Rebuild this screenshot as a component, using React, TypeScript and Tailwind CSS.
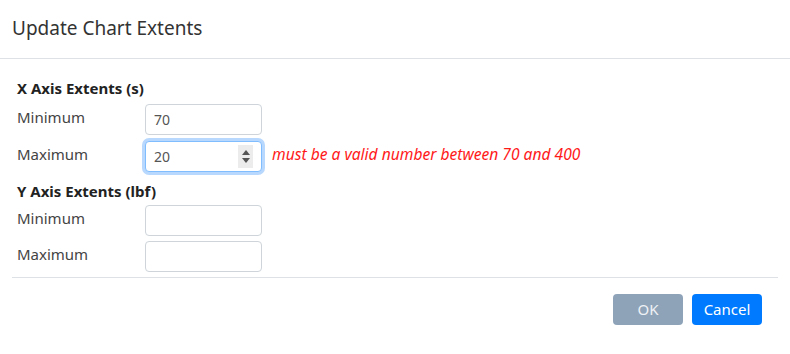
import React from 'react';

const font = { fontFamily: '"Noto Sans", "Open Sans", sans-serif' };

const Field: React.FC<{ label: string; value?: string; focused?: boolean; error?: string }> = ({ label, value = '', focused, error }) => (
  <div className="flex items-center h-[31px]">
    <label className="w-[128px] text-[15px] text-[#444] -mt-[4px]">{label}</label>
    <div className="relative">
      <input
        type="text"
        readOnly
        value={value}
        className={
          focused
            ? 'w-[117px] h-[31px] px-2 text-[14px] text-[#555] bg-white border border-[#80bdff] rounded-[4px] outline-none ring-[3px] ring-[#b9d8fd]'
            : 'w-[117px] h-[31px] px-2 text-[14px] text-[#555] bg-white border border-[#ced4da] rounded-[4px] outline-none'
        }
      />
      {focused && (
        <div className="absolute right-[9px] top-[4px] w-[15px] h-[23px] bg-[#ececec] flex flex-col items-center justify-center gap-[3px]">
          <svg width="8" height="5" viewBox="0 0 8 5"><path d="M0 5 L4 0 L8 5 Z" fill="#555" /></svg>
          <svg width="8" height="5" viewBox="0 0 8 5"><path d="M0 0 L4 5 L8 0 Z" fill="#555" /></svg>
        </div>
      )}
    </div>
    {error && <span className="ml-[10px] text-[15.6px] italic text-[#ff1a1a] -mt-[4px]">{error}</span>}
  </div>
);

const App: React.FC = () => {
  return (
    <div className="w-[790px] h-[354px] bg-white" style={font}>
      {/* Header */}
      <div className="h-[59px] border-b border-[#dee2e6] px-3 flex items-center">
        <h2 className="text-[19px] text-[#333] pb-[2px]">Update Chart Extents</h2>
      </div>

      {/* Body */}
      <div className="px-3">
        <div className="pl-[5px] pt-[19px] pb-[5px]">
          <h3 className="text-[15px] font-bold text-[#222] h-[20px] leading-[20px] mb-[6px]">X Axis Extents (s)</h3>
          <div className="flex flex-col gap-[6px]">
            <Field label="Minimum" value="70" />
            <Field label="Maximum" value="20" focused error="must be a valid number between 70 and 400" />
          </div>
          <h3 className="text-[15px] font-bold text-[#222] h-[20px] leading-[20px] mt-[9px] mb-[4px]">Y Axis Extents (lbf)</h3>
          <div className="flex flex-col gap-[5px]">
            <Field label="Minimum" />
            <Field label="Maximum" />
          </div>
        </div>

        {/* Footer */}
        <div className="border-t border-[#dee2e6] flex justify-end gap-[9px] pt-[16px] pr-[16px]">
          <button className="w-[70px] h-[31px] rounded-[4px] bg-[#8fa3b8] text-[15px] text-[#eef1f5]">OK</button>
          <button className="w-[70px] h-[31px] rounded-[4px] bg-[#007bff] text-[15px] text-white">Cancel</button>
        </div>
      </div>
    </div>
  );
};

export default App;
